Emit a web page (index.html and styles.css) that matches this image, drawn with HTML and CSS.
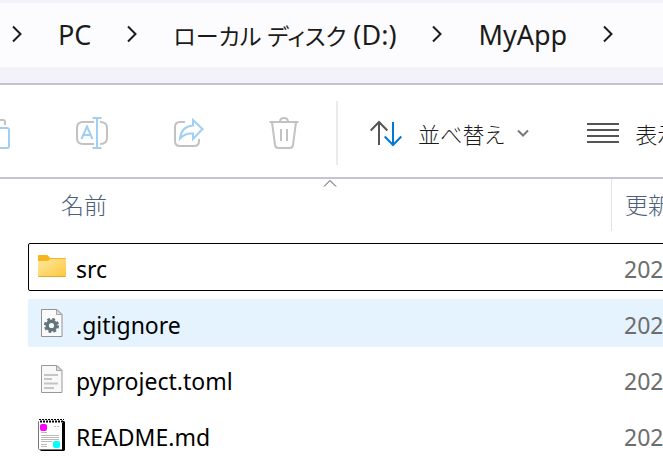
FILE: index.html
```
<!DOCTYPE html>
<html lang="ja">
<head>
    <meta charset="UTF-8">
    <meta name="viewport" content="width=device-width, initial-scale=1.0">
    <title>MyApp</title>
    <link rel="stylesheet" href="styles.css">
</head>
<body>
    <header class="address">
        <nav class="breadcrumb">
            <svg class="chevron" viewBox="0 0 10 18"><path d="M1 1.5L8.5 9L1 16.5"/></svg>
            <a href="#">PC</a>
            <svg class="chevron" viewBox="0 0 10 18"><path d="M1 1.5L8.5 9L1 16.5"/></svg>
            <a href="#"><span class="kana">ローカル ディスク</span> (D:)</a>
            <svg class="chevron" viewBox="0 0 10 18"><path d="M1 1.5L8.5 9L1 16.5"/></svg>
            <a href="#">MyApp</a>
            <svg class="chevron" viewBox="0 0 10 18"><path d="M1 1.5L8.5 9L1 16.5"/></svg>
        </nav>
    </header>

    <div class="toolbar">
        <button class="tool" aria-label="貼り付け" disabled>
            <svg viewBox="0 0 32 32">
                <path class="gray" d="M17 3h6q2 0 2 2v3M15 30H6q-3 0-3-3V6q0-3 3-3"/>
                <rect class="blue" x="13" y="11" width="16" height="20" rx="2"/>
            </svg>
        </button>
        <button class="tool" aria-label="名前の変更" disabled>
            <svg viewBox="0 0 32 32">
                <path class="gray" d="M18 5H7Q1 5 1 11v10q0 6 6 6h11M24 5q7 0 7 6v10q0 6-7 6"/>
                <path class="blue" d="M5.5 22L11 9.500L16.500 22M7.500 18h7M21 1v30M16.500 1h9M16.500 31h9"/>
            </svg>
        </button>
        <button class="tool" aria-label="共有" disabled>
            <svg viewBox="0 0 32 32">
                <path class="gray" d="M13 5H8Q3 5 3 10v14q0 5 5 5h14q5 0 5-5v-2"/>
                <path class="blue" d="M21 3l9.500 9L21 22v-5.500C15 16 11 18 8 21.500C9 14 13 9 21 8.500z"/>
            </svg>
        </button>
        <button class="tool" aria-label="削除" disabled>
            <svg viewBox="0 0 32 32">
                <path class="gray" d="M1.500 5h29M12 5q0-4 4-4t4 4M4 5l3 23q.5 3 3.500 3h11q3 0 3.500-3l3-23M13 12v12M19 12v12"/>
            </svg>
        </button>
        <span class="divider"></span>
        <button class="tool sort">
            <svg viewBox="0 0 32 32">
                <path class="dark" d="M9 28V5M.7 13.500L9 5l8.300 8.500"/>
                <path class="accent" d="M23 5v23M14.700 19.500L23 28l8.300-8.500"/>
            </svg>
            <span>並べ替え</span>
            <svg class="drop" viewBox="0 0 12 8"><path d="M1 1.500l5 5l5-5"/></svg>
        </button>
        <button class="tool">
            <svg viewBox="0 0 32 32">
                <path class="dark" d="M0 7h32M0 13h32M0 19h32M0 25h32"/>
            </svg>
            <span>表示</span>
        </button>
    </div>

    <main class="files">
        <table>
            <thead>
                <tr>
                    <th class="name">
                        <svg class="asc" viewBox="0 0 14 8"><path d="M1 7.500L7 1.500l6 6"/></svg>
                        <div class="head">名前</div>
                    </th>
                    <th class="date"><div class="head">更新日時</div></th>
                </tr>
            </thead>
            <tbody>
                <tr class="focused">
                    <td class="name">
                        <div class="file">
                            <svg viewBox="0 0 28 32">
                                <defs>
                                    <linearGradient id="folder" x1="0" y1="0" x2="1" y2="1">
                                        <stop offset="0" stop-color="#ffe8a0"/>
                                        <stop offset="1" stop-color="#fdc73c"/>
                                    </linearGradient>
                                </defs>
                                <path d="M0 5q0-1 1-1h8q1 0 3 3h15q1 0 1 1v8H0z" fill="#f9b51c"/>
                                <path d="M0 10h9q2 0 3-2h16v16q0 2-1 2H1q-1 0-1-2z" fill="url(#folder)"/>
                                <path d="M.5 25.500h27" stroke="#e5a72a"/>
                            </svg>
                            src
                        </div>
                    </td>
                    <td class="date">202</td>
                </tr>
                <tr class="hover">
                    <td class="name">
                        <div class="file">
                            <svg viewBox="0 0 28 32">
                                <path d="M3.500 2.500H19l5 5v22H3.500z" fill="#fafafa" stroke="#8f9296"/>
                                <path d="M18.500 2.500v5H24z" fill="#dcdcdc" stroke="#a3a5a8"/>
                                <circle cx="13.500" cy="18.500" r="4.300" fill="none" stroke="#63747d" stroke-width="3.400"/>
                                <circle cx="13.500" cy="18.500" r="6.500" fill="none" stroke="#63747d" stroke-width="2.200" stroke-dasharray="2.800 2.305"/>
                            </svg>
                            .gitignore
                        </div>
                    </td>
                    <td class="date">202</td>
                </tr>
                <tr>
                    <td class="name">
                        <div class="file">
                            <svg viewBox="0 0 28 32">
                                <path d="M3.500 2.500H19l5 5v22H3.500z" fill="#f8f8f8" stroke="#96989a"/>
                                <path d="M18.500 2.500v5H24z" fill="#dcdcdc" stroke="#a3a5a8"/>
                                <path d="M6 12h14M6 16h8M6 20.500h14M6 25h10" stroke="#c4c6c6" stroke-width="2"/>
                            </svg>
                            pyproject.toml
                        </div>
                    </td>
                    <td class="date">202</td>
                </tr>
                <tr>
                    <td class="name">
                        <div class="file">
                            <svg viewBox="0 0 28 32">
                                <path d="M24 2h2l1 1v28l-1 1H3l-1-1z" fill="#000"/>
                                <path d="M.5 3q0-1 1-1h23v28.500H1.500q-1 0-1-1z" fill="#fff" stroke="#777"/>
                                <path d="M1 2h24" stroke="#fff" stroke-width="4"/>
                                <path d="M1 .5h25M2 2.500h24" stroke="#000" stroke-dasharray="2 1"/>
                                <path d="M2.500 1.500h23M2.500 3.500h23" stroke="#000" stroke-dasharray="1 2"/>
                                <path d="M16 7.500h2M19 7.500h2M3 13.500h6M3 16.500h18M3 18.500h18M3 20.500h18M3 22.500h11M3 25.500h6M3 27.500h6" stroke="#bbb"/>
                                <path d="M24.500 4v27M26.500 3v28" stroke="#000"/>
                                <rect x="2" y="5" width="7" height="7" rx="2" fill="#f0f"/>
                                <rect x="15" y="22" width="7" height="7" rx="2" fill="#0ff"/>
                            </svg>
                            README.md
                        </div>
                    </td>
                    <td class="date">202</td>
                </tr>
            </tbody>
        </table>
    </main>
</body>
</html>
```
FILE: styles.css
```
* { box-sizing: border-box; }
body { margin: 0; background: #fff; color: #1b1b1b; font-family: "Noto Sans", "Noto Sans CJK JP", sans-serif; font-size: 23px; font-feature-settings: "palt"; overflow: hidden; }
svg { display: block; flex: none; fill: none; }

.address { padding: 3px 0 16px; background: #f3f2f9; border-bottom: 2px solid #c6c3d9; }
.breadcrumb { display: flex; align-items: center; gap: 36px; height: 64px; padding: 0 0 2px 12px; background: #fcfcfe; font-size: 27px; white-space: nowrap; }
.breadcrumb a { color: inherit; text-decoration: none; }
.kana { font-size: 23px; }
.chevron { width: 10px; height: 18px; stroke: #1b1b1b; stroke-width: 2; }

.toolbar { display: flex; align-items: center; gap: 64px; height: 94px; margin-left: -20px; padding-top: 4px; border-bottom: 2px solid #c6c3d9; white-space: nowrap; }
.tool { display: flex; flex: none; align-items: center; gap: 16px; padding: 0; border: none; background: none; color: inherit; font: inherit; font-size: 22px; font-weight: 300; font-feature-settings: inherit; }
.tool svg { width: 32px; height: 32px; stroke-width: 2; }
.tool .drop { width: 12px; height: 8px; margin-left: -3px; stroke: #777; }
.gray { stroke: #c2c2c2; }
.blue { stroke: #a0cff2; }
.dark { stroke: #555; }
.accent { stroke: #0078d4; }
.divider { flex: none; width: 2px; height: 64px; margin: 0 -32px 0 -28px; background: #ebebeb; }
.sort { margin-right: -6px; }

.files { margin-right: -8px; padding-left: 28px; }
table { width: 100%; margin-top: -8px; border-spacing: 0 8px; table-layout: fixed; }
th, td { padding: 0; text-align: left; font-weight: normal; white-space: nowrap; overflow: hidden; }
th { position: relative; height: 56px; vertical-align: top; color: #4c607a; font-weight: 300; }
td { height: 48px; }
.head { height: 52px; padding-left: 33px; line-height: 52px; }
th.date .head { padding-left: 13px; border-left: 1px solid #e2e2e2; }
th.date, td.date { width: 60px; }
td.date { padding: 4px 0 0 13px; color: #6d6d6d; }
.asc { position: absolute; top: 0; left: 50%; width: 14px; height: 8px; margin-left: 3px; stroke: #444; }
.file { display: flex; align-items: center; gap: 10px; padding-left: 10px; color: #000; line-height: 44px; padding-top: 4px; }
.file svg { width: 28px; height: 32px; margin-top: -4px; }
.focused { outline: 1px solid #000; outline-offset: -1px; border-radius: 2px; }
.hover td { background: #e5f3ff; }
.hover .name { border-radius: 2px 0 0 2px; }
```
